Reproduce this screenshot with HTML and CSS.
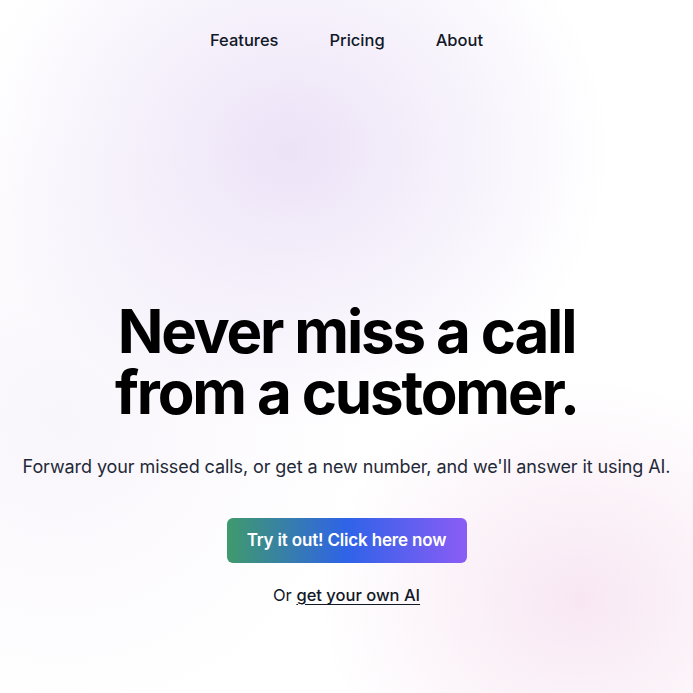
FILE: index.html
```html
<!DOCTYPE html>
<html lang="en">
<head>
<meta charset="utf-8">
<title>Never miss a call</title>
<link rel="stylesheet" href="styles.css">
</head>
<body>
<div class="page">
  <header class="header">
    <nav class="nav">
      <a href="#" class="nav-link">Features</a>
      <a href="#" class="nav-link">Pricing</a>
      <a href="#" class="nav-link">About</a>
    </nav>
  </header>
  <main class="hero">
    <h1 class="title">Never miss a call<br>from a customer.</h1>
    <p class="subtitle">Forward your missed calls, or get a new number, and we'll answer it using AI.</p>
    <a href="#" class="cta">Try it out! Click here now</a>
    <p class="alt">Or <a href="#" class="alt-link">get your own AI</a></p>
  </main>
</div>
</body>
</html>
```

FILE: styles.css
```css
* { box-sizing: border-box; }
html, body { margin: 0; padding: 0; }
body {
  font-family: Inter, "Noto Sans", sans-serif;
  color: #111827;
  background-color: #ffffff;
  min-height: 693px;
  background-image:
    radial-gradient(ellipse 320px 280px at 290px 150px, rgba(233, 222, 246, 0.85), rgba(233, 222, 246, 0) 100%),
    radial-gradient(ellipse 260px 220px at 580px 600px, rgba(246, 225, 240, 0.8), rgba(246, 225, 240, 0) 100%),
    radial-gradient(ellipse 300px 300px at 60px 420px, rgba(243, 236, 248, 0.5), rgba(243, 236, 248, 0) 100%);
}
.page { display: flex; flex-direction: column; }
.header { display: flex; justify-content: center; padding-top: 28px; }
.nav { display: flex; gap: 51px; }
.nav-link {
  font-size: 16.5px;
  line-height: 24px;
  font-weight: 500;
  color: #111827;
  text-decoration: none;
}
.hero {
  display: flex;
  flex-direction: column;
  align-items: center;
  text-align: center;
  padding-top: 249px;
}
.title {
  margin: 0;
  font-size: 60px;
  line-height: 61px;
  font-weight: 700;
  letter-spacing: -0.036em;
  color: #000;
}
.subtitle {
  margin: 28px 0 0;
  font-size: 18px;
  line-height: 32px;
  color: #1f2937;
  letter-spacing: -0.005em;
}
.cta {
  margin-top: 35px;
  display: block;
  width: 240px;
  height: 45px;
  line-height: 45px;
  border-radius: 6px;
  background: linear-gradient(90deg, #3f9a6c 0%, #2f63e8 50%, #8b5cf6 100%);
  color: #fff;
  font-size: 17px;
  font-weight: 600;
  text-decoration: none;
  letter-spacing: -0.01em;
}
.alt {
  margin: 20px 0 0;
  font-size: 16.5px;
  line-height: 24px;
  color: #111827;
}
.alt-link {
  color: #111827;
  font-weight: 500;
  text-decoration: underline;
  text-underline-offset: 3px;
}
```
